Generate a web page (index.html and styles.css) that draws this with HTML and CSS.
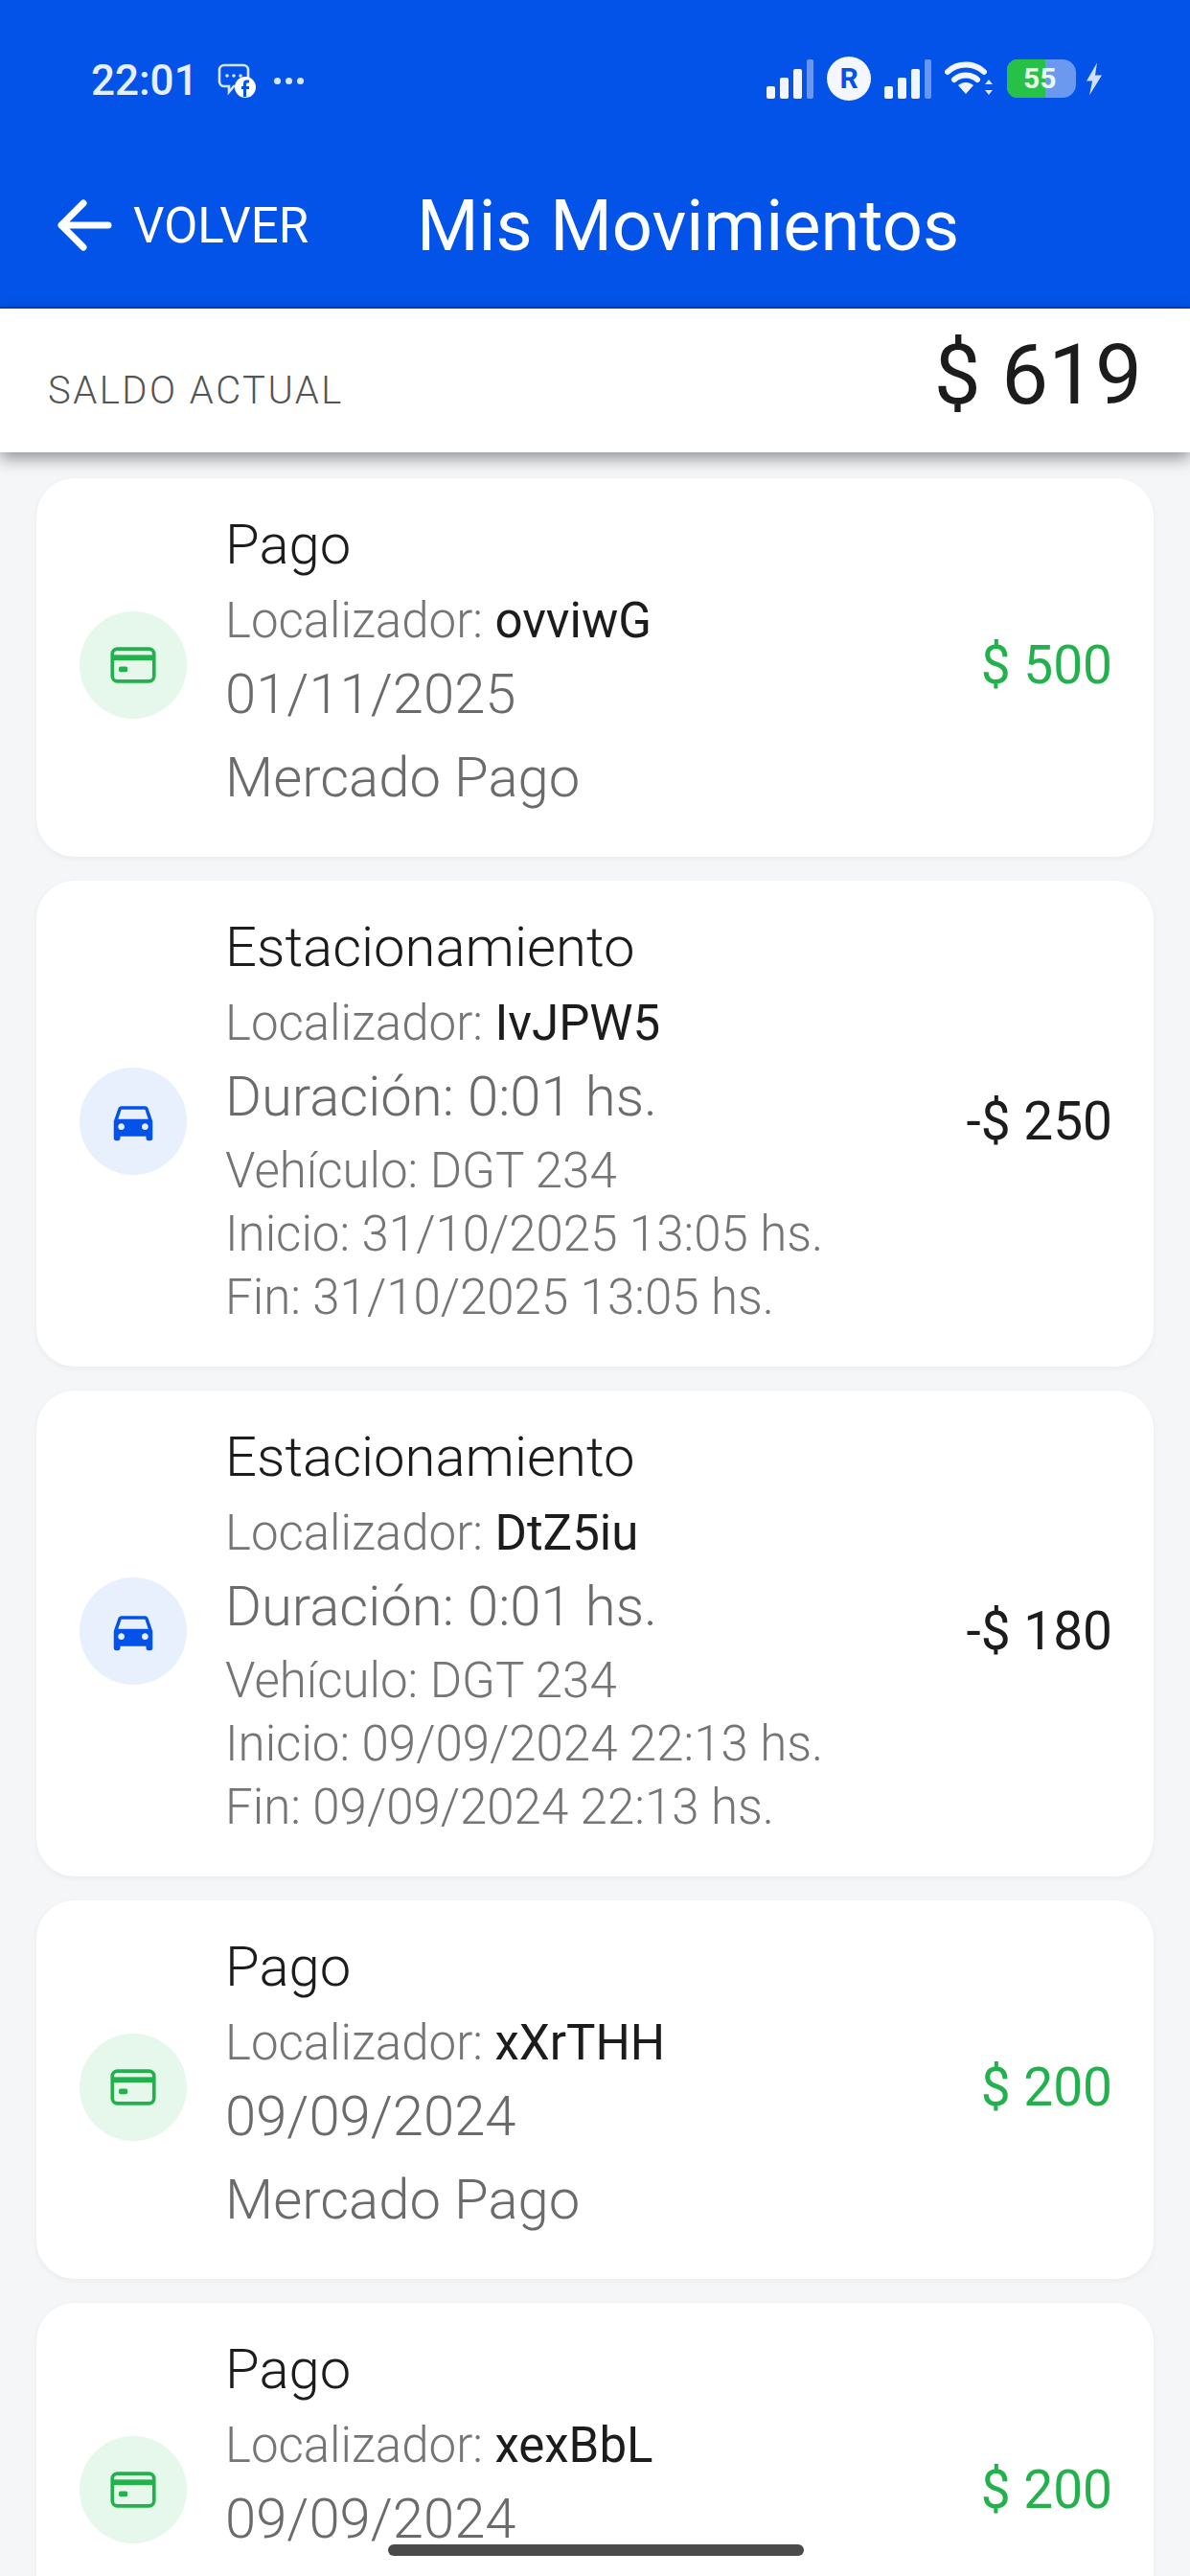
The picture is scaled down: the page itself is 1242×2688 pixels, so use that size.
FILE: index.html
```html
<!DOCTYPE html>
<html lang="es">
<head>
    <meta charset="UTF-8">
    <meta name="viewport" content="width=device-width, initial-scale=1.0">
    <title>Mis Movimientos</title>
    <link rel="stylesheet" href="styles.css">
</head>
<body>
    <svg class="sprites" width="0" height="0">
        <symbol id="ico-card" viewBox="0 0 24 24">
            <rect x="3" y="5" width="18" height="14" rx="2.2" fill="none" stroke="currentColor" stroke-width="1.5"/>
            <rect x="3" y="7.6" width="18" height="2.4" fill="currentColor"/>
            <rect x="5.8" y="12.6" width="3.8" height="2.4" rx="0.8" fill="currentColor"/>
        </symbol>
        <symbol id="ico-car" viewBox="0 0 24 24">
            <path fill="currentColor" d="M18.92 6.01C18.72 5.42 18.16 5 17.5 5h-11c-.66 0-1.21.42-1.42 1.01L3 12v8c0 .55.45 1 1 1h1c.55 0 1-.45 1-1v-1h12v1c0 .55.45 1 1 1h1c.55 0 1-.45 1-1v-8l-2.08-5.99zM6.5 16c-.83 0-1.5-.67-1.5-1.5S5.67 13 6.5 13s1.5.67 1.5 1.5S7.33 16 6.5 16zm11 0c-.83 0-1.5-.67-1.5-1.5s.67-1.5 1.5-1.5 1.5.67 1.5 1.5-.67 1.5-1.5 1.5zM5 11l1.5-4.5h11L19 11H5z"/>
        </symbol>
        <symbol id="ico-signal" viewBox="0 0 49 41">
            <rect x="0" y="28" width="9" height="13" rx="2" fill="#f0f5ff"/>
            <rect x="14" y="19" width="9" height="22" rx="2" fill="#f0f5ff"/>
            <rect x="28" y="10" width="9" height="31" rx="2" fill="#f0f5ff"/>
            <rect x="42" y="0" width="7" height="41" rx="2" fill="#fff" opacity="0.4"/>
        </symbol>
    </svg>

    <header class="topbar">
        <div class="statusbar">
            <div class="status-left">
                <span class="clock">22:01</span>
                <svg class="chat-ico" width="42" height="38" viewBox="0 0 42 38">
                    <path d="M8 3h20a5 5 0 0 1 5 5v12a5 5 0 0 1-5 5H18l-5 6v-6H8a5 5 0 0 1-5-5V8a5 5 0 0 1 5-5z" fill="none" stroke="#d8e5ff" stroke-width="2.6"/>
                    <circle cx="11" cy="14" r="1.8" fill="#d8e5ff"/><circle cx="18" cy="14" r="1.8" fill="#d8e5ff"/><circle cx="25" cy="14" r="1.8" fill="#d8e5ff"/>
                    <circle cx="30" cy="26" r="11" fill="#fff"/>
                    <path d="M31 36v-8h3v-3h-3v-2c0-1 .5-1.500 1.500-1.500H34v-3h-2.500C29 18.500 28 20 28 22.500V25h-2v3h2v8z" fill="#0353e9"/>
                </svg>
                <span class="status-dots"><i></i><i></i><i></i></span>
            </div>
            <div class="status-right">
                <svg width="49" height="41"><use href="#ico-signal"/></svg>
                <span class="roaming">R</span>
                <svg width="49" height="41"><use href="#ico-signal"/></svg>
                <svg width="51" height="38" viewBox="0 0 51 38">
                    <path d="M3 12C13 2 31 2 41 12" fill="none" stroke="#f0f5ff" stroke-width="6" stroke-linecap="round"/>
                    <path d="M10 20c7-6 17-6 24 0" fill="none" stroke="#f0f5ff" stroke-width="6" stroke-linecap="round"/>
                    <path d="M14 26c5-4 11-4 16 0l-8 9z" fill="#f0f5ff"/>
                    <path d="M46 20l4 5h-8zM46 36l4-5h-8z" fill="#d8e5ff"/>
                </svg>
                <div class="battery">
                    <div class="battery-fill"></div>
                    <span class="battery-num">55</span>
                </div>
                <svg class="bolt" width="18" height="35" viewBox="0 0 18 34">
                    <path d="M12 0L1 19h6l-3 15L17 13h-7z" fill="#cfdfff"/>
                </svg>
            </div>
        </div>
        <div class="navbar">
            <div class="back">
                <svg width="60" height="54" viewBox="0 0 60 54">
                    <path d="M55 27H6M29 4L6 27l23 23" fill="none" stroke="#fff" stroke-width="7" stroke-linecap="round" stroke-linejoin="round"/>
                </svg>
                <span class="back-label">VOLVER</span>
            </div>
            <h1 class="page-title">Mis Movimientos</h1>
        </div>
    </header>

    <section class="balance">
        <span class="balance-label">SALDO ACTUAL</span>
        <span class="balance-value">$ 619</span>
    </section>

    <main class="list">
        <article class="card">
            <div class="badge badge-green"><svg width="58" height="58"><use href="#ico-card"/></svg></div>
            <div class="info">
                <div class="info-title">Pago</div>
                <div class="info-loc">Localizador: <b>ovviwG</b></div>
                <div class="info-main">01/11/2025</div>
                <div class="info-method">Mercado Pago</div>
            </div>
            <div class="amount amount-in">$ 500</div>
        </article>

        <article class="card">
            <div class="badge badge-blue"><svg width="54" height="54"><use href="#ico-car"/></svg></div>
            <div class="info">
                <div class="info-title">Estacionamiento</div>
                <div class="info-loc">Localizador: <b>IvJPW5</b></div>
                <div class="info-main">Duración: 0:01 hs.</div>
                <div class="info-detail">Vehículo: DGT 234</div>
                <div class="info-detail">Inicio: 31/10/2025 13:05 hs.</div>
                <div class="info-detail">Fin: 31/10/2025 13:05 hs.</div>
            </div>
            <div class="amount">-$ 250</div>
        </article>

        <article class="card">
            <div class="badge badge-blue"><svg width="54" height="54"><use href="#ico-car"/></svg></div>
            <div class="info">
                <div class="info-title">Estacionamiento</div>
                <div class="info-loc">Localizador: <b>DtZ5iu</b></div>
                <div class="info-main">Duración: 0:01 hs.</div>
                <div class="info-detail">Vehículo: DGT 234</div>
                <div class="info-detail">Inicio: 09/09/2024 22:13 hs.</div>
                <div class="info-detail">Fin: 09/09/2024 22:13 hs.</div>
            </div>
            <div class="amount">-$ 180</div>
        </article>

        <article class="card">
            <div class="badge badge-green"><svg width="58" height="58"><use href="#ico-card"/></svg></div>
            <div class="info">
                <div class="info-title">Pago</div>
                <div class="info-loc">Localizador: <b>xXrTHH</b></div>
                <div class="info-main">09/09/2024</div>
                <div class="info-method">Mercado Pago</div>
            </div>
            <div class="amount amount-in">$ 200</div>
        </article>

        <article class="card">
            <div class="badge badge-green"><svg width="58" height="58"><use href="#ico-card"/></svg></div>
            <div class="info">
                <div class="info-title">Pago</div>
                <div class="info-loc">Localizador: <b>xexBbL</b></div>
                <div class="info-main">09/09/2024</div>
            </div>
            <div class="amount amount-in">$ 200</div>
        </article>
    </main>

    <div class="home-bar"></div>
</body>
</html>
```

FILE: styles.css
```css
* {
    box-sizing: border-box;
}
html, body {
    margin: 0;
    padding: 0;
}
body {
    position: relative;
    width: 1242px;
    height: 2688px;
    overflow: hidden;
    background: #f4f6f8;
    font-family: Roboto, sans-serif;
    font-weight: 300;
    color: #1a1a1a;
}
.sprites {
    position: absolute;
}

/* header */
.topbar {
    height: 322px;
    background: #0353e9;
    color: #fff;
    border-bottom: 2px solid #0040c8;
}
.statusbar {
    height: 168px;
    padding: 56px 91px 0 95px;
    display: flex;
    justify-content: space-between;
    align-items: flex-start;
}
.status-left {
    display: flex;
    align-items: center;
    height: 56px;
}
.status-right {
    display: flex;
    align-items: center;
    gap: 14px;
    height: 52px;
}
.clock {
    font-size: 44px;
    font-weight: 500;
    color: #e6efff;
}
.chat-ico {
    margin-left: 19px;
}
.status-dots {
    display: flex;
    gap: 5px;
    margin-left: 18px;
}
.status-dots i {
    width: 7px;
    height: 7px;
    border-radius: 50%;
    background: #d8e5ff;
}
.roaming {
    width: 46px;
    height: 46px;
    border-radius: 50%;
    background: #f4f7ff;
    color: #0353e9;
    font-size: 30px;
    font-weight: 700;
    line-height: 46px;
    text-align: center;
}
.battery {
    position: relative;
    width: 72px;
    height: 40px;
    border-radius: 11px 14px 14px 11px;
    background: #6a99ef;
    overflow: hidden;
}
.battery-fill {
    width: 40px;
    height: 100%;
    background: #27c148;
}
.battery-num {
    position: absolute;
    left: 17px;
    top: 0;
    font-size: 30px;
    font-weight: 700;
    line-height: 40px;
    color: #e9fbe9;
}
.bolt {
    margin-left: -4px;
}
.navbar {
    height: 152px;
    padding: 0 0 18px 58px;
    display: flex;
    align-items: center;
}
.back {
    display: flex;
    align-items: center;
    width: 377px;
}
.back-label {
    margin-left: 21px;
    font-size: 51px;
    font-weight: 400;
}
.page-title {
    margin: 0;
    font-size: 74px;
    font-weight: 400;
}

/* saldo */
.balance {
    position: relative;
    height: 150px;
    padding: 0 50px;
    background: #fff;
    box-shadow: 0 6px 16px rgba(0, 0, 0, 0.42);
    display: flex;
    justify-content: space-between;
    align-items: center;
}
.balance-label {
    padding-top: 21px;
    font-size: 40px;
    letter-spacing: 2.5px;
    color: #555;
}
.balance-value {
    padding-bottom: 12px;
    font-size: 87px;
    font-weight: 400;
    color: #1c1c1c;
}

/* lista */
.list {
    padding: 27px 38px 0;
    display: flex;
    flex-direction: column;
    gap: 25px;
}
.card {
    flex: none;
    min-height: 395px;
    padding: 33px 43px 39px 45px;
    background: #fff;
    border-radius: 40px;
    box-shadow: 0 2px 6px rgba(0, 0, 0, 0.05);
    display: flex;
    align-items: center;
}
.badge {
    flex: none;
    width: 112px;
    height: 112px;
    margin-right: 40px;
    border-radius: 50%;
    display: flex;
    align-items: center;
    justify-content: center;
}
.badge-green {
    background: #e6f8ec;
    color: #22b14c;
}
.badge-blue {
    background: #e9f0fd;
    color: #0353e9;
}
.info {
    flex: 1;
    align-self: flex-start;
}
.info-title {
    font-size: 58px;
    line-height: 72px;
    color: #1c1c1c;
}
.info-loc {
    margin-top: 20px;
    font-size: 51px;
    line-height: 48px;
    color: #757575;
}
.info-loc b {
    font-weight: 400;
    color: #1c1c1c;
}
.info-main {
    margin-top: 20px;
    font-size: 58px;
    line-height: 64px;
    color: #6b6b6b;
}
.info-method {
    margin-top: 23px;
    margin-bottom: 12px;
    font-size: 58px;
    line-height: 64px;
    color: #6b6b6b;
}
.info-detail {
    font-size: 51px;
    line-height: 66px;
    color: #757575;
}
.info-main + .info-detail {
    margin-top: 13px;
}
.amount {
    flex: none;
    font-size: 55px;
    font-weight: 400;
    color: #1c1c1c;
}
.amount-in {
    color: #22b14c;
}

.home-bar {
    position: absolute;
    left: 405px;
    top: 2655px;
    width: 434px;
    height: 12px;
    border-radius: 6px;
    background: #4a4a4a;
}
```
